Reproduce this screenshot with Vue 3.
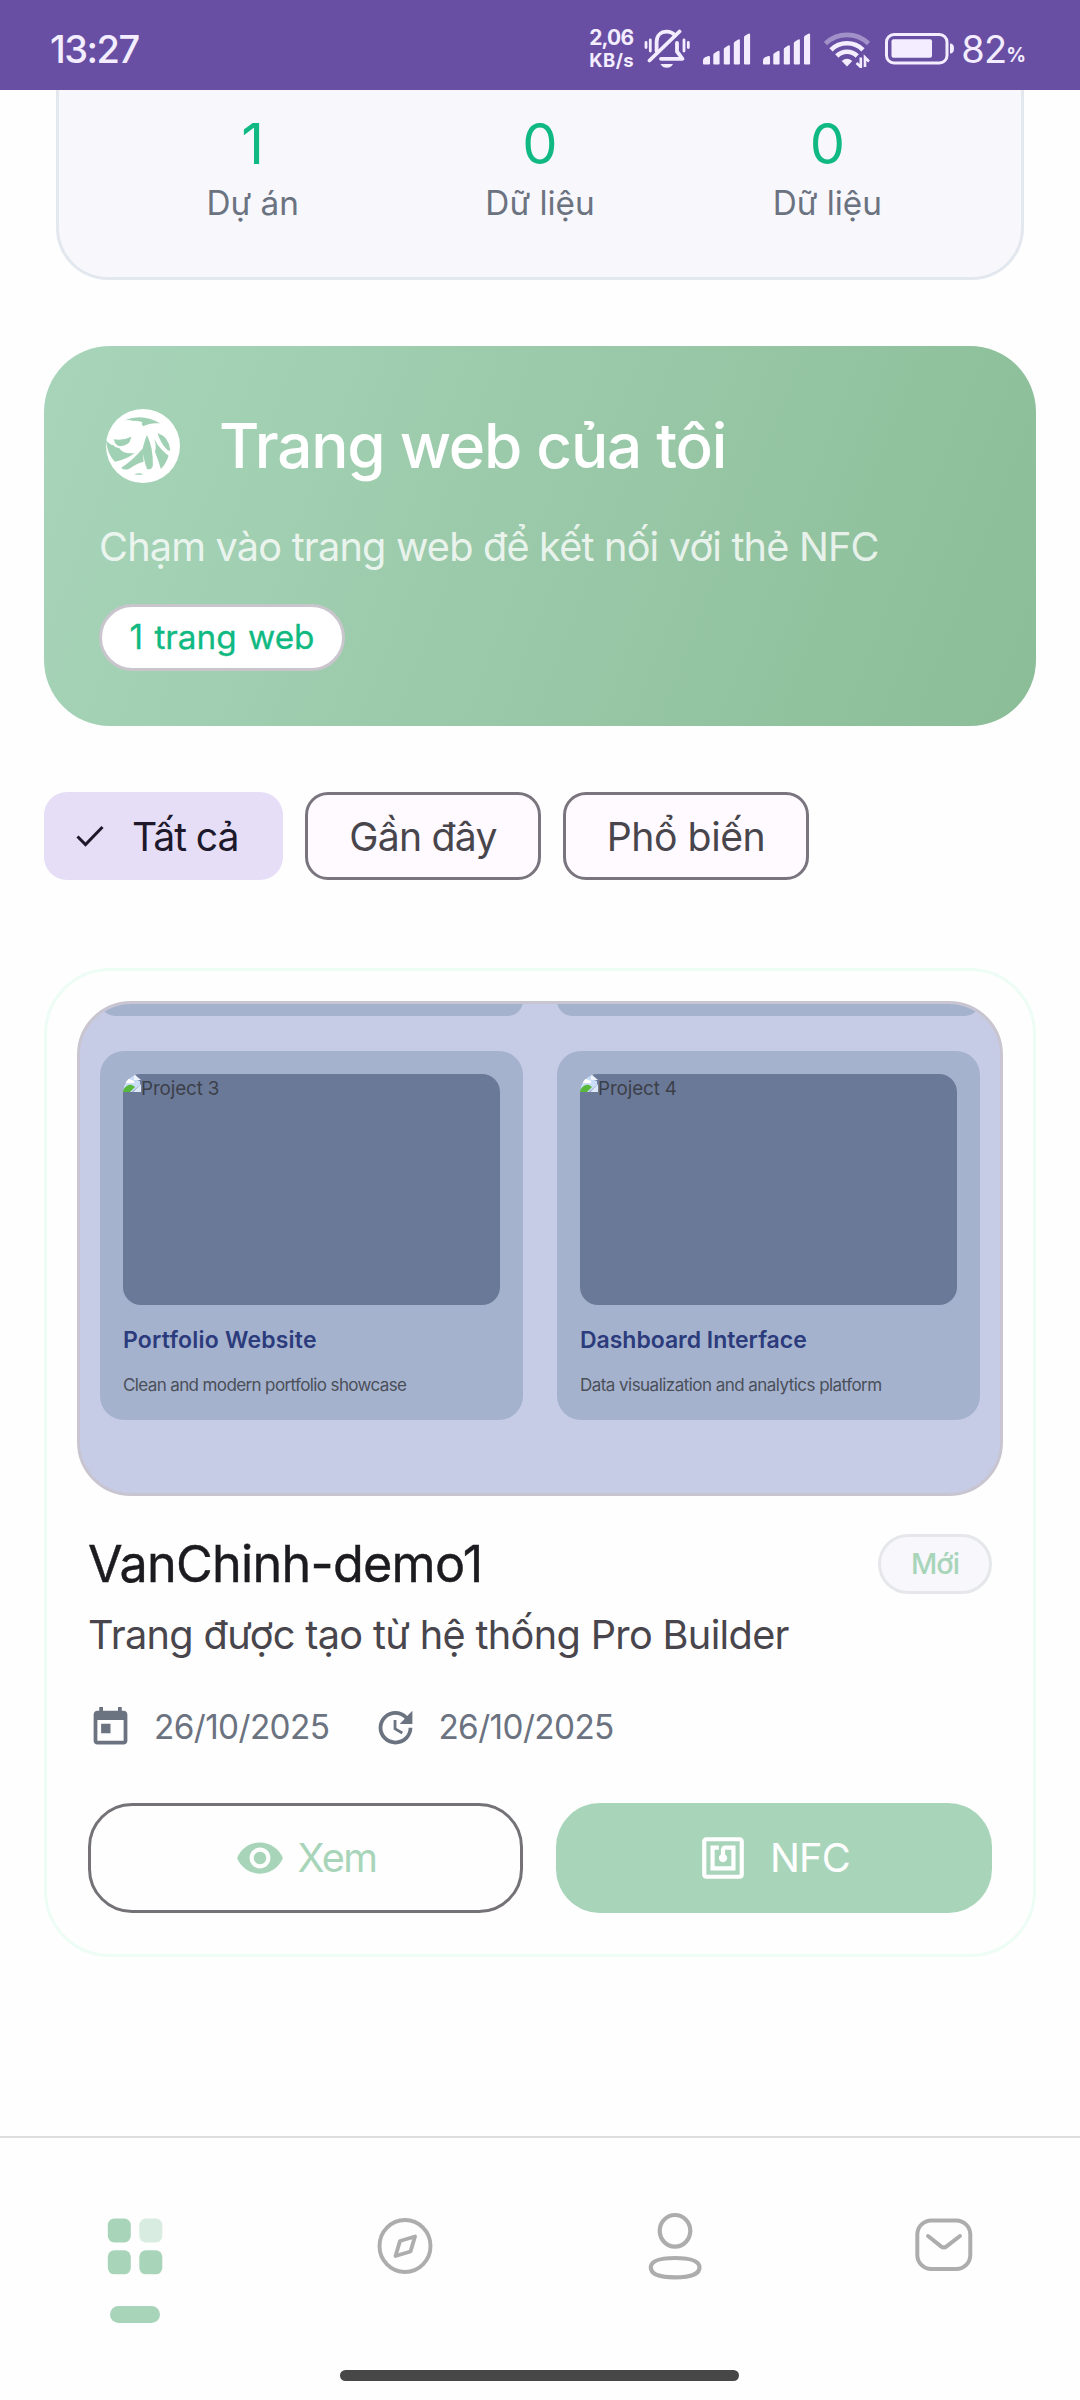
<script setup>
const stats = [
  { value: '1', label: 'Dự án' },
  { value: '0', label: 'Dữ liệu' },
  { value: '0', label: 'Dữ liệu' },
]
const previews = [
  { alt: 'Project 3', title: 'Portfolio Website', text: 'Clean and modern portfolio showcase', cls: 'portfolio' },
  { alt: 'Project 4', title: 'Dashboard Interface', text: 'Data visualization and analytics platform', cls: 'dashboard' },
]
</script>

<template>
  <div class="screen">
    <header class="status">
      <span class="clock">13:27</span>
      <div class="status-right">
        <div class="net"><span class="rate">2,06</span><span class="unit">KB/s</span></div>
        <svg class="bell" viewBox="0 0 46 40" fill="none" stroke="#f3edff" stroke-width="3.8" stroke-linecap="round">
          <path d="M2 13.5v5M6.3 11v11M40 11v11M44.3 13.5v5" stroke-width="2.8" />
          <path d="M31 6.500C29 4 26.500 2.700 22.800 2.700C16.500 2.700 12.600 6.700 12.600 13v9" />
          <path d="M33 14v8.500l5.500 7.300H17" stroke-linejoin="round" />
          <path d="M5.500 31.500L35.500 2.500" />
          <path d="M16.500 35h12.500c-1.500 2.700-3.500 3.800-6.200 3.800s-4.800-1.100-6.300-3.800z" fill="#f3edff" stroke="none" />
        </svg>
        <svg v-for="n in 2" :key="n" :class="'bars bars-' + n" viewBox="0 0 48 32" fill="#f3edff">
          <path d="M0 27.500q0-2.500 2-3.200l3.400-1.200q1.600-.4 1.600 1.400V30.500q0 1-1 1H1q-1 0-1-1z" />
          <path d="M10.300 22q0-1.300 1.300-2l3.300-2q1.700-.8 1.700 1V30.500q0 1-1 1h-4.300q-1 0-1-1z" />
          <path d="M20.800 16.500q0-1.300 1.300-2l3.100-2q1.700-.8 1.700 1V30.500q0 1-1 1h-4.100q-1 0-1-1z" />
          <path d="M30.800 10.500q0-1.300 1.300-2l3.100-2q1.700-.8 1.700 1V30.500q0 1-1 1h-4.100q-1 0-1-1z" />
          <path d="M41 4.500q0-1.300 1.300-2l3.100-1.800q1.700-.8 1.700 1V30.500q0 1-1 1H42q-1 0-1-1z" />
        </svg>
        <svg class="wifi" viewBox="0 0 47 37" fill="none" stroke="#f3edff" stroke-width="4.600">
          <path d="M1.500 12.500A31 31 0 0 1 44.500 12.500" opacity=".42" />
          <path d="M7 18.800A22.800 22.800 0 0 1 39 18.800" />
          <path d="M12.800 25A14.500 14.500 0 0 1 33.200 25" />
          <path d="M23 35.500l-5.300-5.600q5.300-4.300 10.600 0z" fill="#f3edff" stroke="none" />
          <path d="M36.800 26.500v9.500l-4.300-4M41 36v-9.500l4 4" stroke-width="2.600" />
        </svg>
        <svg class="battery" viewBox="0 0 70 32" fill="none">
          <rect x="1.500" y="1.500" width="60.500" height="28.500" rx="7.500" stroke="#f3edff" stroke-width="3" />
          <rect x="6.500" y="6.300" width="40.500" height="18.500" rx="2" fill="#f3edff" />
          <path d="M65 10.500q4 0 4 5t-4 5z" fill="#f3edff" />
        </svg>
        <span class="level">82</span><span class="pct">%</span>
      </div>
    </header>

    <main>
      <section class="stats">
        <div v-for="(s, i) in stats" :key="i" class="stat">
          <span class="stat-value">{{ s.value }}</span>
          <span class="stat-label">{{ s.label }}</span>
        </div>
      </section>

      <section class="hero">
        <div class="hero-head">
          <svg class="logo" viewBox="222 234 213 222" preserveAspectRatio="none">
            <ellipse cx="328.500" cy="345" rx="106.500" ry="111" fill="#fff" />
            <g fill="#a1d1b4">
              <path d="M276 268Q326 246 378 277Q350 274 329 286Q322 277 327 274Q314 268 302 270Q288 266 276 268Z" />
              <path d="M222 328Q233 342 243 343Q250 352 260 351Q270 370 304 366Q282 386 248 392Q226 372 222 328Z" />
              <path d="M244 325Q270 330 295 317Q292 334 282 340Q264 350 254 343Q246 336 244 325Z" />
              <path d="M266 410Q300 388 328 352L330 392Q312 396 288 414Q272 419 266 410Z" />
              <path d="M340 312Q327 345 327 362Q334 398 340 414Q352 418 357 404Q358 350 340 312Z" />
              <path d="M361 324Q368 348 363 362Q374 392 380 414Q396 396 402 374Q374 352 361 324Z" />
              <path d="M370 306Q404 318 407 358Q402 362 396 354Q380 338 370 306Z" />
              <path d="M303 430Q318 423 329 430Q316 433 303 430Z" />
            </g>
          </svg>
          <h1>Trang web của tôi</h1>
        </div>
        <p class="hero-sub">Chạm vào trang web để kết nối với thẻ NFC</p>
        <span class="count">1 trang web</span>
      </section>

      <nav class="chips">
        <button class="chip chip-all">
          <svg viewBox="0 0 28 22" fill="none" stroke="#1d192b" stroke-width="3"><path d="M1.500 11.500l8 8L26.500 2" /></svg>
          <span>Tất cả</span>
        </button>
        <button class="chip chip-recent">Gần đây</button>
        <button class="chip chip-popular">Phổ biến</button>
      </nav>

      <article class="project">
        <div class="preview">
          <div class="sliver"></div>
          <div class="sliver"></div>
          <div v-for="p in previews" :key="p.alt" :class="['mini', p.cls]">
            <div class="shot">
              <svg class="broken" viewBox="0 0 18 18">
                <path d="M0 0h11v5l6 2v4L9 18H0z" fill="#c9dcf8" />
                <path d="M11 0v6h7z" fill="#eef3fb" />
                <path d="M3 7q2-4 5-1q4 0 3 3H3z" fill="#fff" />
                <path d="M0 16q4-6 9-5l3 2-5 5H0z" fill="#58b83c" />
                <path d="M10 18l8-8v8z" fill="#dce8f7" />
              </svg>
              <span>{{ p.alt }}</span>
            </div>
            <h3>{{ p.title }}</h3>
            <p>{{ p.text }}</p>
          </div>
        </div>

        <div class="body">
          <div class="title-row">
            <h2>VanChinh-demo1</h2>
            <span class="badge">Mới</span>
          </div>
          <p class="desc">Trang được tạo từ hệ thống Pro Builder</p>
          <div class="meta">
            <svg viewBox="0 0 24 24"><path d="M19 3h-1V1h-2v2H8V1H6v2H5c-1.110 0-1.990.9-1.990 2L3 19c0 1.100.89 2 2 2h14c1.100 0 2-.9 2-2V5c0-1.100-.9-2-2-2zm0 16H5V8h14v11zM7 10h5v5H7z" /></svg>
            <span>26/10/2025</span>
            <svg viewBox="0 0 24 24"><path d="M21 10.120h-6.780l2.740-2.820c-2.730-2.700-7.150-2.800-9.880-.1-2.730 2.710-2.730 7.080 0 9.790s7.150 2.710 9.880 0C18.320 15.650 19 14.080 19 12.100h2c0 1.980-.88 4.550-2.640 6.290-3.510 3.480-9.210 3.480-12.720 0-3.500-3.470-3.530-9.110-.02-12.580s9.140-3.470 12.650 0L21 3v7.120zM12.500 8v4.250l3.500 2.080-.72 1.210L11 13V8h1.500z" /></svg>
            <span>26/10/2025</span>
          </div>
          <div class="actions">
            <button class="btn view">
              <svg viewBox="0 0 24 24"><path d="M12 4.500C7 4.500 2.730 7.610 1 12c1.730 4.390 6 7.500 11 7.500s9.270-3.110 11-7.500c-1.730-4.390-6-7.500-11-7.500zM12 17c-2.760 0-5-2.240-5-5s2.240-5 5-5 5 2.240 5 5-2.240 5-5 5zm0-8c-1.660 0-3 1.340-3 3s1.340 3 3 3 3-1.340 3-3-1.340-3-3-3z" /></svg>
              <span>Xem</span>
            </button>
            <button class="btn nfc">
              <svg viewBox="0 0 24 24"><path d="M20 2H4c-1.100 0-2 .9-2 2v16c0 1.100.9 2 2 2h16c1.100 0 2-.9 2-2V4c0-1.100-.9-2-2-2zm0 18H4V4h16v16zM18 6h-5c-1.100 0-2 .9-2 2v2.280c-.6.35-1 .98-1 1.720 0 1.100.9 2 2 2s2-.9 2-2c0-.74-.4-1.380-1-1.720V8h3v8H8V8h2V6H6v12h12V6z" /></svg>
              <span>NFC</span>
            </button>
          </div>
        </div>
      </article>
    </main>

    <footer>
      <div class="tabs">
        <div class="tab active">
          <svg viewBox="0 0 70 70" fill="#a8d5ba">
            <rect x="7.800" y="7.500" width="23" height="24" rx="6.500" />
            <rect x="39.300" y="7.500" width="23" height="24" rx="6.500" opacity=".42" />
            <rect x="7.800" y="39.300" width="23" height="24" rx="6.500" />
            <rect x="39.300" y="39.300" width="23" height="24" rx="6.500" />
          </svg>
          <i></i>
        </div>
        <div class="tab">
          <svg viewBox="0 0 70 70" fill="none" stroke="#adadad" stroke-width="3.900" stroke-linejoin="round">
            <ellipse cx="35" cy="35" rx="25.500" ry="26" />
            <path d="M45 25.500L40.500 40.500L25.500 45L30 30z" />
          </svg>
        </div>
        <div class="tab">
          <svg viewBox="0 0 70 70" fill="none" stroke="#adadad" stroke-width="4.200">
            <ellipse cx="35" cy="19.800" rx="15.300" ry="15.800" />
            <path d="M10.800 56.500C10.800 50 20 47 35 47S59.500 50 59.500 56.500S50 66.300 35 66.300S10.800 63 10.800 56.500Z" />
          </svg>
        </div>
        <div class="tab">
          <svg viewBox="0 0 70 70" fill="none" stroke="#adadad" stroke-width="4" stroke-linecap="round">
            <rect x="7.300" y="9.500" width="53" height="48.500" rx="14" />
            <path d="M18 25L31 35.300Q33.800 37.400 36.600 35.300L50 25" />
          </svg>
        </div>
      </div>
      <div class="home"></div>
    </footer>
  </div>
</template>

<style>
body { background: #fff; }
</style>

<style scoped>
.screen {
  width: 1080px; height: 2400px; overflow: hidden; display: flex; flex-direction: column;
  background: #fefefe; font-family: Inter, "Noto Sans", sans-serif; font-weight: 400;
}
h1, h2, h3, p { margin: 0; font-weight: 400; }
span, h1, h2, h3, p { white-space: nowrap; }
svg { display: block; flex: none; }
button { font: inherit; border: 0; padding: 0; margin: 0; box-sizing: border-box; background: none; }

.status {
  height: 90px; flex: none; box-sizing: border-box; padding: 10px 54px 0 50px; background: #684fa3; color: #f3edff;
  display: flex; align-items: flex-start; justify-content: space-between;
}
.clock { font-size: 38px; line-height: 78px; letter-spacing: -1.500px; font-weight: 500; }
.status-right { display: flex; height: 78px; align-items: center; }
.net { display: flex; flex-direction: column; width: 44px; font-weight: 700; height: 40px; justify-content: space-between; margin-right: 11px; }
.rate { font-size: 21px; line-height: 18px; letter-spacing: -.9px; }
.unit { font-size: 18.500px; line-height: 17px; letter-spacing: .4px; }
.bell { width: 46px; height: 40px; margin-right: 13px; }
.bars { width: 48px; height: 32px; }
.bars-1 { margin-right: 12px; }
.bars-2 { margin-right: 13px; }
.wifi { width: 47px; height: 37px; margin-right: 14px; }
.battery { width: 70px; height: 32px; margin-right: 6px; }
.level { font-size: 38px; letter-spacing: -.9px; }
.pct { font-size: 19.500px; font-weight: 700; line-height: 20px; margin-top: 12px; }

main { flex: 1; display: flex; flex-direction: column; padding: 0 44px; }

.stats {
  height: 190px; box-sizing: border-box; margin: 0 12px; padding: 15px 50px 0; flex: none;
  border: 3px solid #e3e7ee; border-top: 0; border-radius: 0 0 52px 52px; background: #f7f7fc; display: flex;
}
.stat { flex: 1; display: flex; flex-direction: column; align-items: center; }
.stat-value { font-size: 56px; line-height: 78px; color: #10b981; }
.stat-label { font-size: 33.300px; line-height: 41px; color: #6b7280; letter-spacing: 0; }

.hero {
  height: 380px; box-sizing: border-box; margin-top: 66px; padding: 56px; flex: none; border-radius: 66px;
  background: linear-gradient(111deg, #a8d5ba 0%, #8bbd97 100%); color: #fff; display: flex; flex-direction: column; align-items: flex-start;
}
.hero-head { display: flex; align-items: center; height: 88px; gap: 39px; padding-left: 6px; }
.logo { width: 74px; height: 74px; }
h1 { font-size: 62px; font-weight: 500; letter-spacing: -1.240px; line-height: 88px; }
.hero-sub { font-size: 39.700px; line-height: 56px; letter-spacing: -.82px; margin-top: 29px; margin-left: -1px; color: rgba(255, 255, 255, .8); }
.count {
  box-sizing: border-box; width: 246px; height: 67px; margin-top: 29px; margin-left: -1px; border: 3px solid #c9c5cd; border-radius: 34px; background: #fff;
  color: #10b981; font-size: 33.300px; line-height: 61px; text-align: center; word-spacing: 2px; -webkit-text-stroke: .3px #10b981;
}

.chips { display: flex; gap: 22px; margin-top: 66px; flex: none; }
.chip {
  height: 88px; display: flex; align-items: center; justify-content: center; font-size: 39.200px; color: #48464c;
  border: 3px solid #79747e; border-radius: 23px; background: #fefaff;
}
.chip-all { width: 239px; border: 0; background: #e6def6; color: #1d192b; justify-content: flex-start; padding-left: 32px; letter-spacing: -1.100px; }
.chip-all svg { width: 28px; height: 22px; margin-right: 28px; }
.chip-recent { width: 236px; letter-spacing: -.77px; }
.chip-popular { width: 246px; letter-spacing: -.45px; }

.project {
  height: 989px; box-sizing: border-box; margin-top: 88px; flex: none; border: 3px solid #edfdf5; border-radius: 66px; padding: 30px 30px 0;
}
.preview {
  height: 495px; box-sizing: border-box; border: 3px solid #c8c5d0; border-radius: 54px; background: #c7cce6; overflow: hidden;
  display: grid; grid-template-columns: 423px 423px; grid-template-rows: 12px 369px; column-gap: 34px; row-gap: 35px; padding: 0 20px;
}
.sliver { height: 30px; margin-top: -18px; border-radius: 22px; background: #a5b2ce; }
.mini { height: 369px; box-sizing: border-box; border-radius: 24px; background: #a5b2ce; padding: 23px; }
.shot { height: 231px; border-radius: 18px; background: #6b7999; overflow: hidden; display: flex; align-items: flex-start; color: #3b4048; }
.broken { width: 18px; height: 18px; }
.shot span { font-size: 18.800px; line-height: 30px; letter-spacing: -.1px; }
.mini h3 { font-size: 23px; line-height: 30px; font-weight: 600; margin-top: 20px; color: #2b3b7c; letter-spacing: .2px; }
.mini p { font-size: 17px; line-height: 24px; margin-top: 18px; color: #4a4f58; letter-spacing: -.62px; }
.dashboard h3 { letter-spacing: -.03px; }
.dashboard p { letter-spacing: -.54px; }

.body { padding: 0 11px; display: flex; flex-direction: column; }
.title-row { height: 60px; margin-top: 38px; display: flex; align-items: center; justify-content: space-between; }
h2 { font-size: 50.300px; line-height: 60px; letter-spacing: -.72px; color: #1c1b1f; -webkit-text-stroke: .4px #1c1b1f; }
.badge {
  box-sizing: border-box; width: 114px; height: 60px; border: 3px solid #e5e7eb; border-radius: 30px; background: #f7f7fc;
  color: #a8d5ba; font-size: 28.800px; line-height: 54px; letter-spacing: -1px; text-align: center; font-weight: 500;
}
.desc { font-size: 39.700px; line-height: 56px; letter-spacing: -.67px; margin-top: 13px; color: #48464c; }
.meta { display: flex; align-items: center; height: 46px; margin-top: 41px; color: #6b7280; font-size: 33.300px; letter-spacing: -.6px; }
.meta svg { width: 45px; height: 45px; fill: #6b7280; margin-right: 21px; }
.meta span + svg { margin-left: 44px; margin-right: 20px; }
.actions { display: flex; gap: 33px; margin-top: 53px; }
.btn { height: 110px; border-radius: 44px; display: flex; align-items: center; justify-content: center; font-size: 39.700px; }
.btn svg { width: 50px; height: 50px; fill: currentColor; }
.view { width: 435px; border: 3px solid #757277; color: #a8d5ba; letter-spacing: -1.660px; gap: 13px; }
.nfc { width: 436px; background: #a8d5ba; color: #fff; letter-spacing: -.76px; gap: 22px; }

footer { height: 264px; box-sizing: border-box; border-top: 2px solid #dedede; flex: none; display: flex; flex-direction: column; align-items: center; }
.tabs { display: flex; width: 1080px; height: 232px; flex: none; }
.tab { width: 270px; display: flex; flex-direction: column; align-items: center; padding-top: 73px; box-sizing: border-box; }
.tab svg { width: 70px; height: 70px; }
.tab i { width: 50px; height: 17px; border-radius: 9px; background: #a8d5ba; margin-top: 25px; }
.home { width: 399px; height: 11px; border-radius: 6px; background: #474747; margin-right: 2px; }
</style>
